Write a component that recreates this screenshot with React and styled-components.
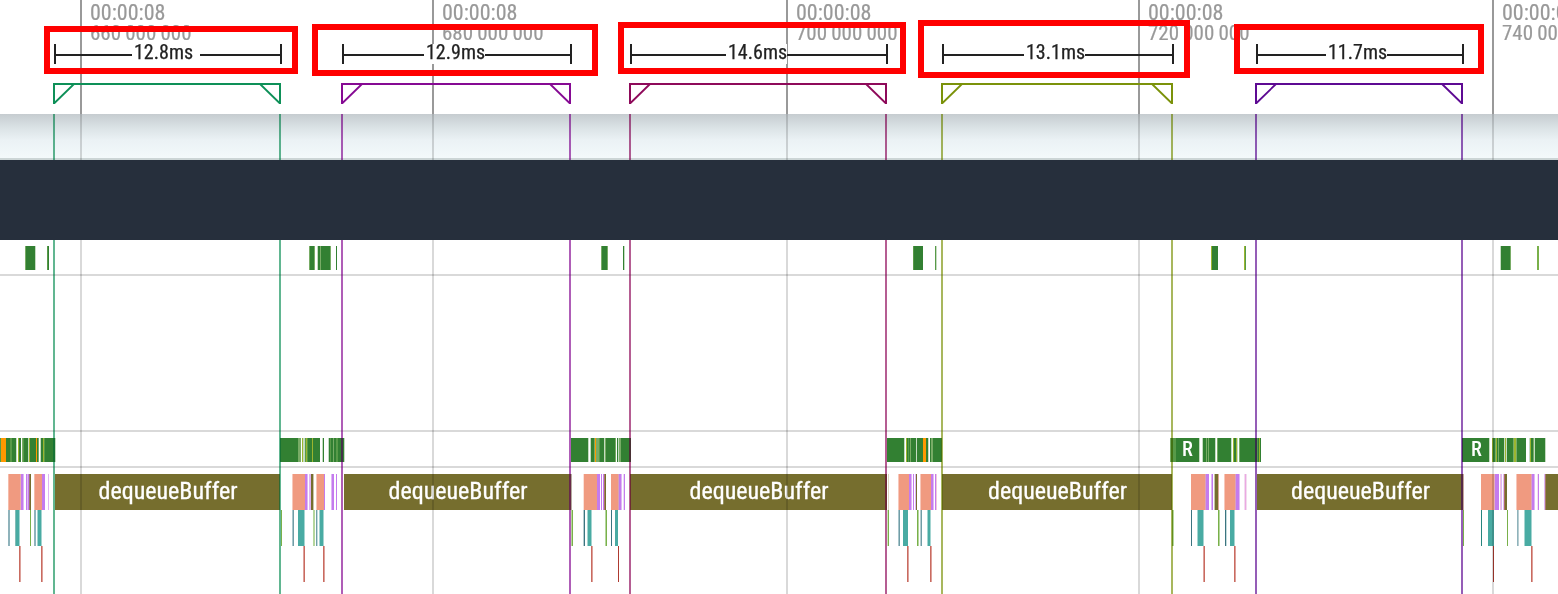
import React from 'react';
import styled, { createGlobalStyle } from 'styled-components';

const GlobalStyle = createGlobalStyle`
  * { box-sizing: border-box; }
  body { margin: 0; background: #fff; overflow: hidden; }
`;

const Timeline = styled.main`
  position: relative;
  width: 1558px;
  height: 594px;
  overflow: hidden;
  display: flex;
  flex-direction: column;
  background: #fff;
  font-family: 'Roboto Condensed', Roboto, sans-serif;
`;

const Ruler = styled.header`
  flex: 0 0 114px;
  display: grid;
  grid-template: 114px / 1558px;
`;

const TickRow = styled.div`
  grid-area: 1 / 1;
  display: grid;
  grid-template-columns: 352px 354px 352px 354px 66px;
  padding-left: 80px;
`;

const Tick = styled.div`
  border-left: 2px solid #999;
  padding: 2px 0 0 8px;
  overflow: hidden;
`;

const TickText = styled.div`
  font-size: ${(p) => p.$size}px;
  line-height: 21px;
  height: 21px;
  color: #999;
  -webkit-text-stroke: 0.2px #999;
  white-space: nowrap;
  word-spacing: -0.7px;
`;

const SpanRow = styled.div`
  grid-area: 1 / 1;
  z-index: 1;
  display: grid;
  grid-template-columns: 288px 288px 312px 314px 208px;
  padding: 44px 0 0 53px;
`;

const Span = styled.div`
  display: flex;
  flex-direction: column;
  gap: 19px;
  width: ${(p) => p.$w}px;
`;

const Measure = styled.div`
  width: 100%;
  height: 20px;
  margin-left: 1px;
  display: flex;
  align-items: center;
  border: solid #222;
  border-width: 0 2px;
`;

const Dash = styled.span`
  height: 2px;
  margin-top: 2px;
  background: #222;
  flex: ${(p) => (p.$w ? `0 0 ${p.$w}px` : '1')};
`;

const Duration = styled.span`
  flex: 0 0 ${(p) => p.$w}px;
  height: 20px;
  padding-left: 2px;
  background: #fff;
  font-size: 20px;
  line-height: 17px;
  color: #222;
  -webkit-text-stroke: 0.25px #222;
  white-space: nowrap;
`;

const FlagShape = styled.svg`
  display: block;
`;

const Highlight = styled.div`
  position: absolute;
  z-index: 2;
  left: ${(p) => p.$x}px;
  top: ${(p) => p.$y}px;
  width: ${(p) => p.$w}px;
  height: ${(p) => p.$h}px;
  border: 6px solid #f00;
`;

const Overview = styled.div`
  flex: 0 0 46px;
  background: linear-gradient(#c6ccd0 0%, #dbe3e6 32%, #ebf2f5 60%, #f3f9fb 100%);
  border-bottom: 2px solid #ccd5d6;
`;

const GroupHeader = styled.div`
  position: relative;
  z-index: 3;
  flex: 0 0 80px;
  background: #262f3c;
`;

const Track = styled.section`
  flex: 0 0 ${(p) => p.$h}px;
  padding-top: 6px;
  border-bottom: ${(p) => (p.$last ? 'none' : '2px solid #d9d9d9')};
`;

const Lane = styled.div`
  position: relative;
  height: ${(p) => p.$h}px;
`;

const Slice = styled.div`
  position: absolute;
  top: 0;
  bottom: 0;
  display: flex;
  justify-content: center;
  align-items: center;
  color: #fff;
`;

const SliceLabel = styled.span`
  font-size: ${(p) => p.$size}px;
  line-height: 1;
  font-weight: ${(p) => p.$weight || 400};
  padding: 0 0 2px 1px;
  -webkit-text-stroke: ${(p) => (p.$weight ? 0 : 0.3)}px #fff;
`;

const GridLine = styled.div`
  position: absolute;
  left: ${(p) => p.$x}px;
  top: 114px;
  bottom: 0;
  width: 2px;
  background: ${(p) => p.$color};
  mix-blend-mode: multiply;
`;

const FlagShade = styled(GridLine)`
  background: color-mix(in srgb, ${(p) => p.$color} 49%, white);
`;

const FlagTint = styled(GridLine)`
  opacity: 0.33;
  mix-blend-mode: normal;
`;

const ticks = [
  [80, '660 000 000'],
  [432, '680 000 000'],
  [786, '700 000 000'],
  [1138, '720 000 000'],
  [1492, '740 000 000'],
];

const spans = [
  { from: 53, to: 281, label: '12.8ms', at: 132, gap: 68, color: '#0e9058' },
  { from: 341, to: 571, label: '12.9ms', at: 424, gap: 61, color: '#860a93' },
  { from: 629, to: 887, label: '14.6ms', at: 726, gap: 61, color: '#8e0a5a' },
  { from: 941, to: 1173, label: '13.1ms', at: 1024, gap: 61, color: '#7b920a' },
  { from: 1255, to: 1463, label: '11.7ms', at: 1326, gap: 61, color: '#5e0a93' },
];

const highlights = [
  [44, 26, 254, 48],
  [312, 24, 286, 52],
  [618, 22, 288, 52],
  [918, 20, 272, 58],
  [1234, 24, 250, 50],
];

const G = '#328032';
const L = '#78ac66';
const M = '#589a48';
const P = '#c5dbc1';
const W = '#fff';
const Y = '#9cb52f';
const O = '#ff9800';
const S = '#f09a80';
const V = '#c47bee';
const U = '#dfb6f5';
const D = '#766e2e';
const T = '#49aba3';
const A = '#a4d5d1';
const B = '#8fb3bb';
const N = '#3b7480';
const E = '#79b04a';
const F = '#b5d69d';
const R = '#c96b60';
const Q = '#dda19b';
const K = '#ae3a30';

// Slice bounds are [start, end, colour].
const cpu = [
  [25, 26, L], [26, 35, G], [35, 35.5, P], [47, 48, M], [48, 49, G],
  [309, 310, L], [310, 314, G], [314, 315, L], [317, 318, P], [318, 320, G], [320, 321, L], [321, 330, G], [330, 331, L], [336, 337, G],
  [601, 602, L], [602, 607, G], [607, 608, L], [623, 624, G], [624, 625, P],
  [913, 914, M], [914, 923, G], [935, 936, M], [936, 937, P],
  [1211, 1212, Y], [1212, 1218, G], [1244, 1245, Y], [1245, 1246, M],
  [1500, 1501, P], [1501, 1510, G], [1510, 1511, L], [1537, 1539, E],
];

// Dense clusters are stored in thirds of a pixel from their origin.
const thirds = (origin, list) => list.map(([a, b, c, t]) => [origin + a / 3, origin + b / 3, c, t]);

const running = [
  ...thirds(0, [[0, 165, G], [165, 168, P], [0, 3, M], [3, 18, O], [30, 36, M], [48, 51, P], [51, 54, W], [54, 57, Y], [63, 66, W], [66, 69, L], [69, 72, M], [84, 87, P], [87, 90, Y], [108, 111, O], [114, 117, L], [117, 120, W], [120, 123, P], [129, 132, Y], [132, 135, M]]),
  ...thirds(270, [[29, 222, G], [222, 225, P], [84, 93, L], [93, 96, W], [96, 99, Y], [99, 105, P], [105, 108, M], [108, 111, Y], [111, 114, M], [126, 129, Y], [150, 156, W], [156, 159, P], [162, 174, W], [174, 177, P], [180, 183, M], [189, 192, L], [198, 204, M]]),
  ...thirds(560, [[32, 213, G], [84, 87, P], [87, 90, W], [90, 93, P], [102, 105, L], [105, 108, O], [108, 117, L], [117, 120, M], [132, 135, P], [135, 138, L], [165, 168, L], [168, 171, W], [174, 177, P], [177, 183, L]]),
  ...thirds(870, [[50, 217, G], [102, 105, P], [105, 108, W], [108, 111, Y], [114, 117, M], [120, 123, L], [138, 141, P], [159, 168, O], [174, 177, P], [177, 180, W], [183, 189, L]]),
  ...thirds(1160, [[32, 303, G], [30, 33, L], [40, 47, M], [117, 120, P], [120, 126, W], [126, 129, P], [138, 141, L], [144, 147, L], [165, 168, P], [168, 171, W], [171, 174, L], [213, 216, P], [216, 219, W], [219, 222, Y], [228, 231, Y], [231, 234, P], [234, 237, W], [237, 240, L], [291, 294, M], [297, 300, Y]]),
  ...thirds(1440, [[66, 315, G], [315, 318, P], [147, 150, P], [150, 156, W], [156, 159, Y], [165, 168, L], [168, 171, Y], [174, 177, L], [192, 195, P], [195, 198, Y], [198, 201, P], [219, 222, L], [222, 228, Y], [228, 231, L], [258, 267, W], [267, 270, P], [270, 273, Y], [279, 282, L], [282, 285, P]]),
];

const runningLabels = [[1173, 1201], [1463, 1489]];

const outer = [
  ...thirds(0, [[24, 27, '#f5bba9'], [27, 60, S], [60, 63, '#e7afa5'], [63, 69, V], [69, 72, U], [78, 81, V], [81, 84, U], [84, 87, V], [87, 90, '#997568'], [90, 93, D], [102, 105, '#f5bba9'], [105, 126, S], [126, 135, V], [144, 147, U], [165, 840, D, 'dequeueBuffer']]),
  ...thirds(270, [[66, 69, '#f7c7ba'], [69, 105, S], [105, 111, V], [111, 114, U], [117, 123, U], [123, 129, D], [129, 132, '#c8c3a7'], [138, 141, '#f7c7ba'], [141, 162, S], [162, 165, V], [182, 185, U], [185, 191, V], [198, 201, V], [222, 903, D, 'dequeueBuffer']]),
  ...thirds(560, [[33, 36, '#b5ada0'], [69, 72, '#fae0d9'], [72, 111, S], [111, 120, V], [123, 126, V], [129, 132, V], [132, 135, '#a97962'], [135, 138, D], [153, 174, S], [174, 177, '#d9a3b2'], [177, 183, V], [183, 186, U], [189, 191, '#eadcf4'], [192, 195, V], [210, 981, D, 'dequeueBuffer']]),
  ...thirds(870, [[54, 57, '#ddd8bf'], [84, 87, '#f7c7ba'], [87, 117, S], [117, 123, V], [123, 126, U], [129, 132, V], [135, 138, U], [138, 141, D], [150, 153, '#f7c7ba'], [153, 183, S], [183, 189, V], [189, 192, U], [195, 198, V], [198, 201, '#f1c7dc'], [216, 906, D, 'dequeueBuffer']]),
  ...thirds(1160, [[93, 135, S], [135, 138, '#dda0be'], [138, 147, V], [153, 156, U], [156, 159, V], [162, 165, '#c8c3a7'], [165, 174, D], [174, 177, '#dda796'], [192, 195, '#f7c7ba'], [195, 225, S], [225, 228, '#dda0be'], [228, 237, V], [237, 240, U], [252, 255, '#f2dcef'], [255, 258, '#eba9e2'], [258, 261, '#f2dcef'], [291, 909, D, 'dequeueBuffer']]),
  ...thirds(1440, [[69, 72, '#c5a69d'], [123, 162, S], [162, 165, '#e6adbd'], [165, 177, V], [180, 183, '#efc5da'], [183, 186, U], [189, 192, U], [192, 195, '#aa705d'], [195, 201, D], [228, 231, '#f7c7ba'], [231, 273, S], [273, 276, '#dda0be'], [276, 282, V], [282, 285, U], [291, 294, '#f3e0ee'], [294, 297, V], [312, 315, U], [315, 318, '#a67a6c'], [318, 360, D]]),
];

const middle = [
  ...thirds(0, [[24, 30, B], [45, 48, '#82bcb7'], [48, 57, T], [57, 60, A], [90, 93, E], [102, 108, B], [111, 114, A], [114, 123, T], [123, 126, A]]),
  ...thirds(270, [[33, 36, E], [66, 69, '#a9c6cc'], [69, 72, '#709da6'], [83, 101, T], [101, 103, A], [129, 135, F], [138, 141, '#709da6'], [141, 144, '#c3dbdc'], [147, 150, A], [150, 159, T], [159, 162, A]]),
  ...thirds(560, [[33, 36, F], [36, 39, E], [69, 72, '#b7cdd1'], [72, 75, N], [81, 84, A], [84, 93, T], [93, 96, A], [135, 138, F], [138, 141, E], [153, 156, N], [165, 174, T]]),
  ...thirds(870, [[51, 54, '#d0e2bd'], [54, 57, E], [84, 87, '#a9c6cc'], [87, 90, '#709da6'], [99, 114, T], [141, 144, E], [144, 147, F], [150, 153, '#b7cdd1'], [153, 156, '#709da6'], [171, 174, A], [174, 181, T], [181, 183, A]]),
  ...thirds(1160, [[36, 39, E], [39, 42, F], [93, 96, N], [112, 114, A], [114, 130, T], [130, 132, A], [174, 177, E], [177, 180, F], [195, 198, N], [198, 200, '#c3dbdc'], [210, 222, T], [222, 225, A]]),
  ...thirds(1440, [[69, 72, E], [123, 126, '#27857e'], [144, 161, T], [201, 204, E], [231, 234, B], [234, 237, '#b7cdd1'], [252, 255, A], [255, 273, T], [273, 276, A]]),
];

const inner = [
  ...thirds(0, [[57, 60, R], [60, 63, Q], [123, 126, R], [126, 129, Q]]),
  ...thirds(270, [[99, 102, Q], [102, 105, R], [159, 162, R], [162, 165, Q]]),
  ...thirds(560, [[93, 96, R], [96, 99, Q], [174, 177, K]]),
  ...thirds(870, [[111, 114, R], [114, 117, Q], [180, 183, R], [183, 186, Q]]),
  ...thirds(1160, [[129, 132, Q], [132, 135, R], [222, 225, R], [225, 228, Q]]),
  ...thirds(1440, [[159, 162, K], [273, 276, R], [276, 279, Q]]),
];

function Slices({ items }) {
  return items.map(([from, to, color, label], i) => (
    <Slice key={i} style={{ left: from, width: to - from, background: color }}>
      {label && <SliceLabel $size={24}>{label}</SliceLabel>}
    </Slice>
  ));
}

function Flag({ from, to, color }) {
  const w = to - from;
  return (
    <FlagShape width={w} height="21" fill="none" stroke={color}>
      <path d={`M1 21V1H${w - 1}V21`} strokeWidth="2" />
      <path d={`M1.5 20L21 1M${w - 1.5} 20L${w - 21} 1`} strokeWidth="1.8" />
    </FlagShape>
  );
}

export default function App() {
  return (
    <Timeline>
      <GlobalStyle />
      <Ruler>
        <TickRow>
          {ticks.map(([x, nanos]) => (
            <Tick key={x}>
              <TickText $size={22}>00:00:08</TickText>
              <TickText $size={21}>{nanos}</TickText>
            </Tick>
          ))}
        </TickRow>
        <SpanRow>
          {spans.map((s) => (
            <Span key={s.from} $w={s.to - s.from}>
              <Measure>
                <Dash $w={s.at - s.from - 3} />
                <Duration $w={s.gap}>{s.label}</Duration>
                <Dash />
              </Measure>
              <Flag from={s.from} to={s.to} color={s.color} />
            </Span>
          ))}
        </SpanRow>
      </Ruler>
      <Overview />
      <GroupHeader />
      <Track $h={36}>
        <Lane $h={24}>
          <Slices items={cpu} />
        </Lane>
      </Track>
      <Track $h={156} />
      <Track $h={36}>
        <Lane $h={24}>
          <Slices items={running} />
          {runningLabels.map(([from, to]) => (
            <Slice key={from} style={{ left: from, width: to - from }}>
              <SliceLabel $size={20} $weight={500}>R</SliceLabel>
            </Slice>
          ))}
        </Lane>
      </Track>
      <Track $h={126} $last>
        <Lane $h={36}>
          <Slices items={outer} />
        </Lane>
        <Lane $h={36}>
          <Slices items={middle} />
        </Lane>
        <Lane $h={36}>
          <Slices items={inner} />
        </Lane>
      </Track>
      {ticks.map(([x]) => (
        <GridLine key={x} $x={x} $color="#d9d9d9" />
      ))}
      {spans.flatMap((s) => [s.from, s.to - 2].map((x) => (
        <React.Fragment key={x}>
          <FlagShade $x={x} $color={s.color} />
          <FlagTint $x={x} $color={s.color} />
        </React.Fragment>
      )))}
      {highlights.map(([x, y, w, h]) => (
        <Highlight key={x} $x={x} $y={y} $w={w} $h={h} />
      ))}
    </Timeline>
  );
}
